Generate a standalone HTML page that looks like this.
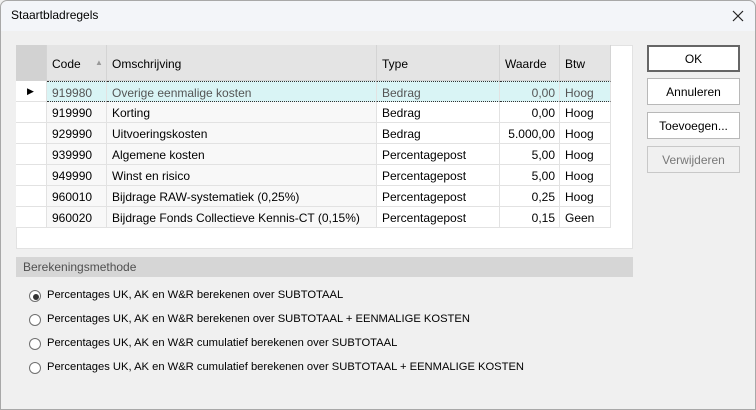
<!DOCTYPE html>
<html><head><style>
*{margin:0;padding:0;box-sizing:border-box}
body{width:756px;height:410px;background:#f0f0f0;font-family:"Liberation Sans",Arial,sans-serif;font-size:12px;color:#000;position:relative;overflow:hidden}
.win{position:absolute;left:0;top:0;width:756px;height:410px;border:1px solid #a8a8a8;border-radius:7px 7px 0 0}
.title{position:absolute;left:1px;top:1px;width:754px;height:30px;background:#f3f5f9;border-radius:7px 7px 0 0}
.title span{position:absolute;left:10px;top:7px;font-size:12px}
.x{position:absolute;left:730px;top:8px}
.panel{position:absolute;left:16px;top:45px;width:617px;height:204px;background:#fff;border:1px solid #e2e2e2}
.c{position:absolute;height:21px;border-right:1px solid #e2e2e2;border-bottom:1px solid #e2e2e2;padding:4px 4px 0 5px;white-space:nowrap;overflow:hidden}
.h{background:#e4e4e4;border-color:#d4d4d4;height:36px;padding-top:12px}
.r{text-align:right}
.btn{position:absolute;left:647px;width:93px;height:27px;background:#fff;border:1px solid #b8b8b8;text-align:center;padding-top:6px}
.band{position:absolute;left:16px;top:257px;width:617px;height:20px;background:#d6d6d6;color:#505050;padding:3px 0 0 7px}
.rad{position:absolute;left:29px;height:16px}
.rad i{position:absolute;left:0;top:1px;width:12px;height:12px;border:1px solid #707070;border-radius:50%;background:#fff}
.rad b{position:absolute;left:3px;top:3px;width:6px;height:6px;border-radius:50%;background:#333}
.rad span{position:absolute;left:18px;top:0;white-space:nowrap;font-size:11.2px}
</style></head><body>
<div class="win"></div>
<div class="title"><span>Staartbladregels</span>
<svg class="x" width="14" height="14" viewBox="0 0 14 14"><path d="M2 2L12 12M12 2L2 12" stroke="#222" stroke-width="1.2"/></svg></div>
<div class="panel"></div>
<div id="g"></div>
<div class="btn" style="top:45px;border:2px solid #666;padding-top:5px">OK</div>
<div class="btn" style="top:78px">Annuleren</div>
<div class="btn" style="top:112px">Toevoegen...</div>
<div class="btn" style="top:146px;background:#f0f0f0;color:#777;border-color:#c8c8c8">Verwijderen</div>
<div class="band">Berekeningsmethode</div>
<div class="rad" style="top:289px"><i><b></b></i><span>Percentages UK, AK en W&amp;R berekenen over SUBTOTAAL</span></div>
<div class="rad" style="top:313px"><i></i><span>Percentages UK, AK en W&amp;R berekenen over SUBTOTAAL + EENMALIGE KOSTEN</span></div>
<div class="rad" style="top:337px"><i></i><span>Percentages UK, AK en W&amp;R cumulatief berekenen over SUBTOTAAL</span></div>
<div class="rad" style="top:361px"><i></i><span>Percentages UK, AK en W&amp;R cumulatief berekenen over SUBTOTAAL + EENMALIGE KOSTEN</span></div>
<script>
var cols=[[16,31],[47,60],[107,270],[377,123],[500,60],[560,51]];
var rows=[["919980","Overige eenmalige kosten","Bedrag","0,00","Hoog"],["919990","Korting","Bedrag","0,00","Hoog"],["929990","Uitvoeringskosten","Bedrag","5.000,00","Hoog"],["939990","Algemene kosten","Percentagepost","5,00","Hoog"],["949990","Winst en risico","Percentagepost","5,00","Hoog"],["960010","Bijdrage RAW-systematiek (0,25%)","Percentagepost","0,25","Hoog"],["960020","Bijdrage Fonds Collectieve Kennis-CT (0,15%)","Percentagepost","0,15","Geen"]];
var h='',hd=['','Code','Omschrijving','Type','Waarde','Btw'];
for(var i=0;i<6;i++){h+='<div class="c h" style="left:'+cols[i][0]+'px;top:45px;width:'+cols[i][1]+'px;'+(i==0?'background:#d2d2d2;':'')+'">'+hd[i]+(i==1?'<span style="position:absolute;left:48px;top:13px;font-size:8px;color:#999">&#9650;</span>':'')+'</div>';}
for(var r=0;r<7;r++){var t=81+r*21;var sel=r==0;
for(var i=0;i<6;i++){var bg=i==0?'#fff':(sel?'#d9f4f5':(i<3?'#f8f8f8':'#fff'));var col=sel&&i>0?'#555':'#000';
var txt=i==0?(sel?'<span style="position:absolute;left:11px;top:5px;font-size:9px">&#9654;</span>':''):rows[r][i-1];
h+='<div class="c'+(i==4?' r':'')+'" style="left:'+cols[i][0]+'px;top:'+t+'px;width:'+cols[i][1]+'px;background:'+bg+';color:'+col+';'+(sel&&i>0?'border-top:1px dotted #333;border-bottom:1px dotted #333;':'')+'">'+txt+'</div>';}}
document.getElementById('g').innerHTML=h;
</script>
</body></html>
